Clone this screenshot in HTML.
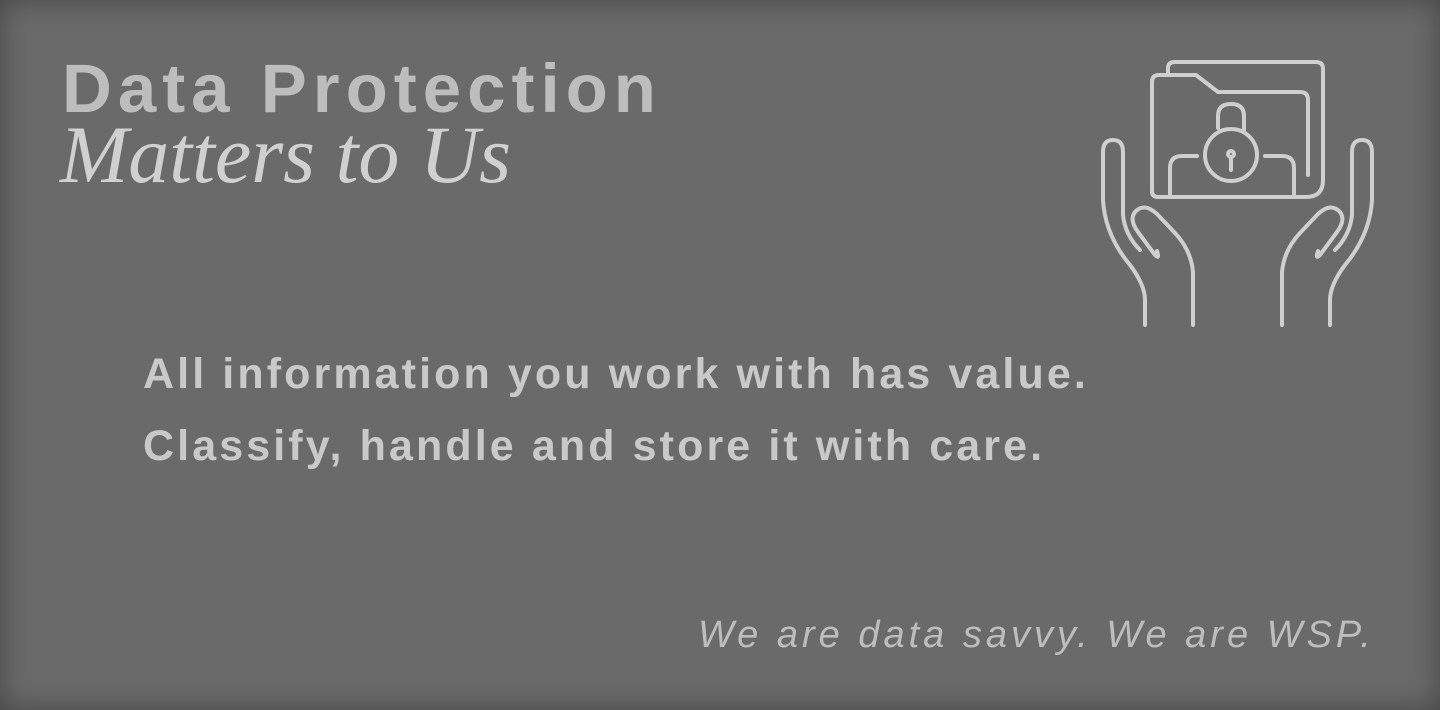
<!DOCTYPE html>
<html><head><style>
html,body{margin:0;padding:0}
body{width:1440px;height:710px;background:#6a6a6a;position:relative;overflow:hidden;font-family:"Liberation Sans",sans-serif;box-shadow:inset 0 0 30px rgba(0,0,0,0.35)}
.t{position:absolute;white-space:nowrap;color:#c9c9c9}
</style></head><body>
<div class="t" style="left:62px;top:52px;font-size:69px;font-weight:bold;color:#bdbdbd;letter-spacing:6px;line-height:74px">Data Protection</div>
<div class="t" style="left:60px;top:113px;font-family:'Liberation Serif',serif;font-style:italic;font-size:82px;color:#d0d0d0;line-height:84px">Matters to Us</div>
<div class="t" style="left:143px;top:349px;font-size:43px;font-weight:bold;letter-spacing:3.1px;line-height:50px">All information you work with has value.</div>
<div class="t" style="left:143px;top:421px;font-size:43px;font-weight:bold;letter-spacing:3.1px;line-height:50px">Classify, handle and store it with care.</div>
<div class="t" style="left:698px;top:612px;font-size:38px;font-style:italic;color:#bdbdbd;letter-spacing:4px;line-height:46px">We are data savvy. We are WSP.</div>
<svg width="1440" height="710" style="position:absolute;left:0;top:0" fill="none" stroke="#cfcfcf" stroke-width="4" stroke-linecap="round" stroke-linejoin="round">
<path d="M1168 72 L1168 68 Q1168 62 1175 62 L1316 62 Q1323 62 1323 69 L1323 180 Q1323 197 1306 197 L1158 197 Q1152 197 1152 191 L1152 82 Q1152 75 1159 75 L1196 75 L1218 92 L1300 92 Q1308 92 1308 100 L1308 175"/>
<path d="M1218 128 L1218 116 Q1218 104 1231 104 Q1244 104 1244 116 L1244 130"/>
<circle cx="1231" cy="155" r="26"/>
<circle cx="1231" cy="154" r="3"/>
<path d="M1231 158 L1231 170"/>
<path d="M1170 195 L1170 168 Q1170 156 1182 156 L1197 156"/>
<path d="M1265 156 L1282 156 Q1294 156 1294 168 L1294 195"/>
<g id="h">
<path d="M1145 325 L1145 300 Q1145 285 1130 265 Q1105 235 1103 200 L1103 152 Q1103 140 1113 140 Q1123 140 1123 152 L1123 215 Q1125 235 1140 250"/>
<path d="M1193 325 L1193 272 Q1191 250 1175 233 L1157 214 Q1144 202 1135 212 Q1129 220 1138 232 L1155 255 Q1160 260 1157 251"/>
</g>
<use href="#h" transform="translate(2475,0) scale(-1,1)"/>
</svg>
</body></html>
